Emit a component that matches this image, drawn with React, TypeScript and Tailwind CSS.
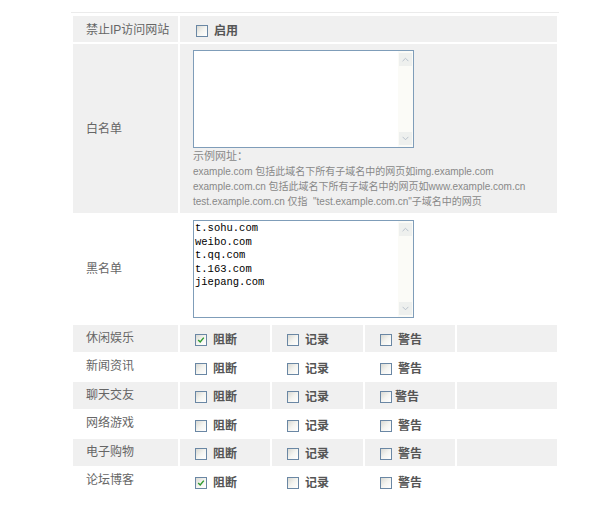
import React from 'react';

const cn = '"Liberation Sans", "Noto Sans CJK SC", sans-serif';

const Box: React.FC<{ checked?: boolean }> = ({ checked }) => (
  <span className="relative inline-block w-[12px] h-[12px] border border-[#6a87a4] bg-gradient-to-br from-[#d9d9d3] via-[#f4f4f0] to-white shrink-0">
    {checked && (
      <svg viewBox="0 0 10 10" className="absolute left-[1px] top-[1px] w-[8px] h-[8px]">
        <path d="M1.5 5 L4 7.5 L8.5 2" fill="none" stroke="#2f9a2f" strokeWidth="1.8" />
      </svg>
    )}
  </span>
);

const Check: React.FC<{ checked?: boolean; label: string; tight?: boolean }> = ({ checked, label, tight }) => (
  <div className={`flex items-center ${tight ? 'gap-[3px]' : 'gap-[6px]'}`}>
    <Box checked={checked} />
    <span className="font-bold text-[12px] text-[#555]">{label}</span>
  </div>
);

const FakeArea: React.FC<{ lines?: string[] }> = ({ lines = [] }) => (
  <div className="flex w-[221px] h-[98px] border border-[#7f9db9] bg-white">
    <div
      className="flex-1 pl-[1px] pt-[1px] text-[10.5px] leading-[13.5px] text-black whitespace-pre"
      style={{ fontFamily: '"Liberation Mono", monospace' }}
    >
      {lines.map((l) => (
        <div key={l}>{l}</div>
      ))}
    </div>
    <div className="w-[15px] flex flex-col justify-between bg-[#fbfbf7] py-[2px]">
      <div className="h-[13px] mx-[1px] bg-[#eef0ee] flex items-center justify-center">
        <svg viewBox="0 0 8 6" className="w-[7px] h-[5px]">
          <path d="M0.5 5 L4 1.5 L7.5 5" fill="none" stroke="#b9c2cc" strokeWidth="1.2" />
        </svg>
      </div>
      <div className="h-[13px] mx-[1px] bg-[#eef0ee] flex items-center justify-center">
        <svg viewBox="0 0 8 6" className="w-[7px] h-[5px]">
          <path d="M0.5 1 L4 4.5 L7.5 1" fill="none" stroke="#b9c2cc" strokeWidth="1.2" />
        </svg>
      </div>
    </div>
  </div>
);

const rows = [
  { name: '休闲娱乐', block: true },
  { name: '新闻资讯' },
  { name: '聊天交友', tight: true },
  { name: '网络游戏' },
  { name: '电子购物' },
  { name: '论坛博客', block: true },
];

export default function App() {
  return (
    <div className="min-h-[524px] bg-white pl-[71px] pt-[12px]" style={{ fontFamily: cn }}>
      <div className="w-[488px] border-t border-[#ebebeb] pt-[1px]">
        <table className="table-fixed border-separate border-spacing-[2px] w-[488px] text-[12px] text-[#666]">
          <colgroup>
            <col className="w-[105px]" />
            <col className="w-[90px]" />
            <col className="w-[91px]" />
            <col className="w-[90px]" />
            <col />
          </colgroup>
          <tbody>
            <tr className="bg-[#f0f0f0]">
              <td className="h-[26px] pl-[13px] pt-[1px]">禁止IP访问网站</td>
              <td colSpan={4} className="pl-[16px] pt-[3px]">
                <Check label="启用" />
              </td>
            </tr>
            <tr className="bg-[#f0f0f0]">
              <td className="pl-[13px]">白名单</td>
              <td colSpan={4} className="pl-[13px] pt-[6px] pb-[4px] text-[#888] text-[10px] leading-[15px] whitespace-nowrap">
                <FakeArea />
                <div className="mt-[1px] text-[11px]">示例网址：</div>
                <div>example.com 包括此域名下所有子域名中的网页如img.example.com</div>
                <div>example.com.cn 包括此域名下所有子域名中的网页如www.example.com.cn</div>
                <div>test.example.com.cn 仅指 &nbsp;"test.example.com.cn"子域名中的网页</div>
              </td>
            </tr>
            <tr>
              <td className="pl-[13px]">黑名单</td>
              <td colSpan={4} className="pl-[13px] pt-[5px] pb-[5px]">
                <FakeArea lines={['t.sohu.com', 'weibo.com', 't.qq.com', 't.163.com', 'jiepang.com']} />
              </td>
            </tr>
            {rows.map((r, i) => (
              <tr key={r.name} className={i % 2 === 0 ? 'bg-[#f0f0f0]' : 'bg-white'}>
                <td className="h-[26.5px] pl-[13px] pb-[1px]">{r.name}</td>
                <td className="pl-[15px] pt-[4px]">
                  <Check label="阻断" checked={r.block} />
                </td>
                <td className="pl-[15px] pt-[4px]">
                  <Check label="记录" />
                </td>
                <td className="pl-[15px] pt-[4px]">
                  <Check label="警告" tight={r.tight} />
                </td>
                <td />
              </tr>
            ))}
          </tbody>
        </table>
      </div>
    </div>
  );
}
